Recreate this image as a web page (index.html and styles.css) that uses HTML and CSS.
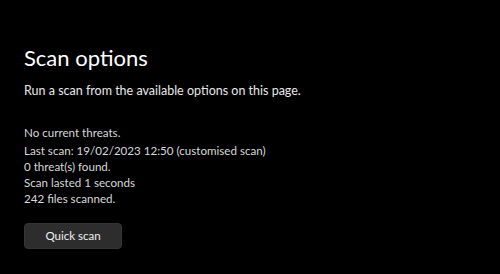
FILE: index.html
```html
<!DOCTYPE html>
<html lang="en">
<head>
  <meta charset="UTF-8" />
  <title>Scan options</title>
  <link rel="stylesheet" href="styles.css">
</head>
<body>
  <div class="page">
    <h1 class="title">Scan options</h1>
    <p class="subtitle">Run a scan from the available options on this page.</p>

    <div class="status">
      <p class="status-head">No current threats.</p>
      <p>Last scan: 19/02/2023 12:50 (customised scan)</p>
      <p>0 threat(s) found.</p>
      <p>Scan lasted 1 seconds</p>
      <p>242 files scanned.</p>
    </div>

    <button class="btn" type="button">Quick scan</button>
  </div>
</body>
</html>
```

FILE: styles.css
```css
body {
  margin: 0;
  background: #000;
  color: #fff;
  font-family: 'Lato', 'Noto Sans', sans-serif;
}

.page {
  padding: 40px 24px 0;
}

.title {
  margin: 0;
  font-size: 22px;
  font-weight: 400;
  line-height: 36px;
}

.subtitle {
  margin: 5px 0 0;
  font-size: 12.5px;
  line-height: 20px;
  color: #e8e8e8;
}

.status {
  margin-top: 24px;
  font-size: 11.6px;
  color: #d8d8d8;
}

.status p {
  margin: 0;
  line-height: 16px;
}

.status .status-head {
  margin-bottom: 2px;
}

.btn {
  display: block;
  margin-top: 16px;
  width: 98px;
  height: 26px;
  padding: 0;
  border: 1px solid #353535;
  border-radius: 4px;
  background: #2d2d2d;
  color: #f0f0f0;
  font-family: inherit;
  font-size: 11.5px;
  line-height: 24px;
  cursor: pointer;
}
```
